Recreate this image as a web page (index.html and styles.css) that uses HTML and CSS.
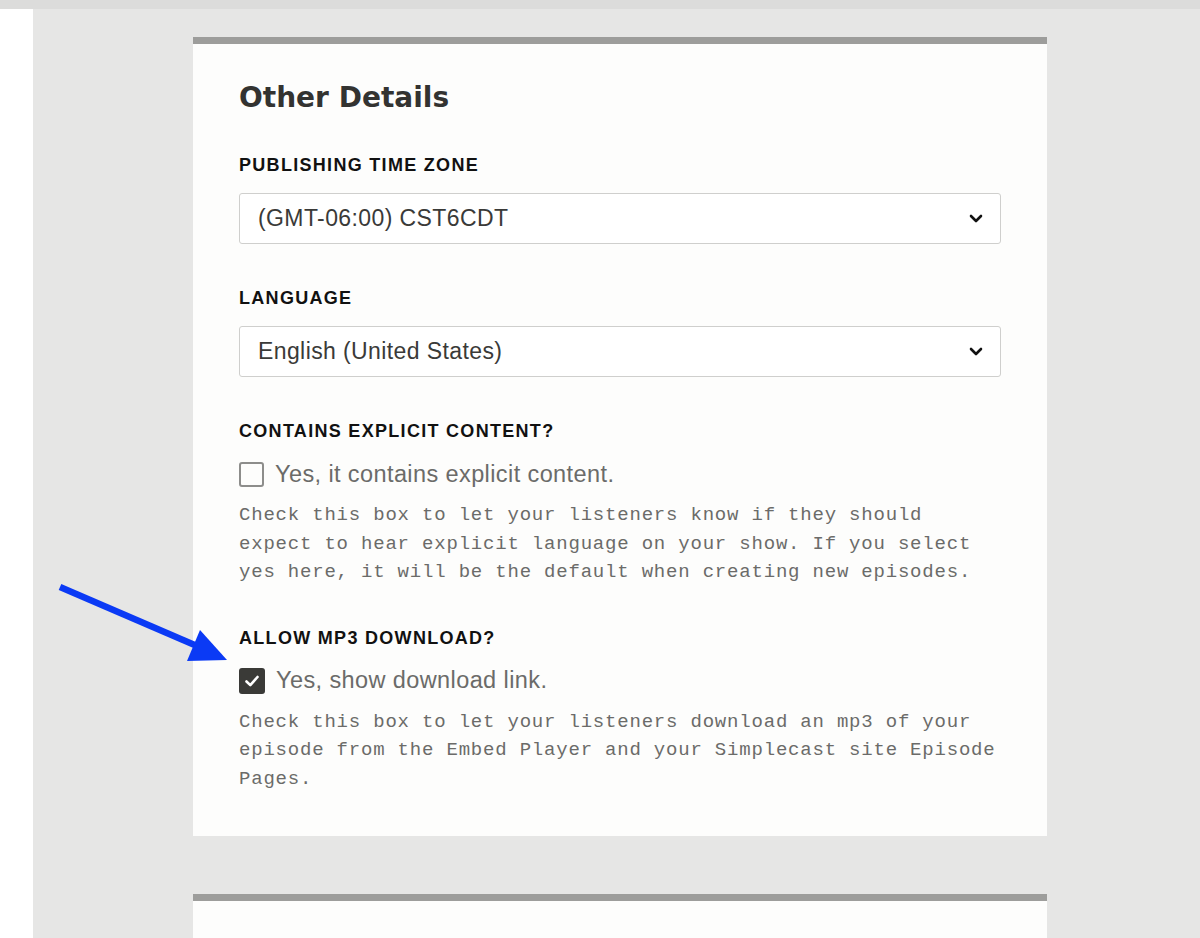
FILE: index.html
```html
<!DOCTYPE html>
<html lang="en">
  <head>
    <meta charset="UTF-8" />
    <title>Other Details</title>
    <link rel="stylesheet" href="styles.css">
  </head>
  <body>
    <div class="topbar"></div>
    <div class="page">
      <aside class="sidebar"></aside>

      <main class="main">
        <!--
          Other details card
        -->
        <section class="card">
          <h2 class="title">Other Details</h2>

          <label class="label">Publishing Time Zone</label>
          <div class="select">
            <span>(GMT-06:00) CST6CDT</span>
            <svg class="chevron" width="14" height="9" viewBox="0 0 14 9" aria-hidden="true">
              <path d="M2 2l5 5 5-5" fill="none" stroke="#111" stroke-width="2.6" stroke-linecap="round" stroke-linejoin="round" />
            </svg>
          </div>

          <label class="label">Language</label>
          <div class="select">
            <span>English (United States)</span>
            <svg class="chevron" width="14" height="9" viewBox="0 0 14 9" aria-hidden="true">
              <path d="M2 2l5 5 5-5" fill="none" stroke="#111" stroke-width="2.6" stroke-linecap="round" stroke-linejoin="round" />
            </svg>
          </div>

          <label class="label">Contains Explicit Content?</label>
          <div class="check">
            <span class="box"></span>
            <span>Yes, it contains explicit content.</span>
          </div>
          <p class="help">
            Check this box to let your listeners know if they should
            expect to hear explicit language on your show. If you select
            yes here, it will be the default when creating new episodes.
          </p>

          <label class="label">Allow MP3 Download?</label>
          <div class="check">
            <span class="box checked">
              <svg width="16" height="14" viewBox="0 0 16 14" aria-hidden="true">
                <path d="M2.5 7.5l3.8 3.6L13.5 3" fill="none" stroke="#fff" stroke-width="2.6" stroke-linecap="round" stroke-linejoin="round" />
              </svg>
            </span>
            <span>Yes, show download link.</span>
          </div>
          <p class="help">
            Check this box to let your listeners download an mp3 of your
            episode from the Embed Player and your Simplecast site Episode
            Pages.
          </p>
        </section>

        <section class="card next"></section>
      </main>
    </div>

    <!-- annotation arrow -->
    <svg class="arrow" width="240" height="680" viewBox="0 0 240 680" aria-hidden="true">
      <line x1="60" y1="587" x2="197" y2="646" stroke="#0b3af5" stroke-width="6.5" />
      <polygon points="200,630 187,661 227,660" fill="#0b3af5" />
    </svg>
  </body>
</html>
```

FILE: styles.css
```css
/*
  Global styles
*/

:root {
  --page-bg: #e6e6e5;
  --card-bg: #fdfdfc;
  --rule: #9d9d9b;
  --text: #333331;
  --muted: #6b6b69;
}
* {
  margin: 0;
  padding: 0;
  box-sizing: border-box;
}
body {
  height: 938px;
  background-color: #fff;
  font-family: "Liberation Sans", Arial, sans-serif;
  overflow: hidden;
}
.topbar {
  height: 9px;
  background-color: #dcdcdb;
}
.page {
  display: flex;
  height: 929px;
}
.sidebar {
  width: 33px;
  background-color: #fff;
}
.main {
  flex: 1;
  padding: 28px 0 0 160px;
  overflow: hidden;
  background-color: var(--page-bg);
}

/*
  Card
*/

.card {
  width: 854px;
  padding: 38px 46px 43px;
  border-top: 7px solid var(--rule);
  background-color: var(--card-bg);
}
.card.next {
  height: 80px;
  padding: 0;
  margin-top: 58px;
}
.card .title {
  font-family: "DejaVu Sans", sans-serif;
  font-size: 28px;
  font-weight: 700;
  line-height: 32px;
  color: var(--text);
}
.card .label {
  display: block;
  margin-top: 43px;
  font-size: 18px;
  font-weight: 700;
  line-height: 22px;
  letter-spacing: 1.3px;
  text-transform: uppercase;
  color: #111;
}
.card .title + .label {
  margin-top: 40px;
}
.card .help + .label {
  margin-top: 40px;
}

/*
  Select
*/

.select {
  display: flex;
  align-items: center;
  justify-content: space-between;
  height: 51px;
  margin-top: 17px;
  padding: 0 17px 0 18px;
  border: 1px solid #cfcfcd;
  border-radius: 3px;
  background-color: #fff;
  font-size: 23px;
  letter-spacing: 0.4px;
  color: #3a3a38;
}

/*
  Checkbox
*/

.check {
  display: flex;
  align-items: center;
  gap: 11px;
  height: 30px;
  margin-top: 17px;
  font-size: 23.5px;
  letter-spacing: 0.4px;
  color: var(--muted);
}
.check .box {
  display: flex;
  align-items: center;
  justify-content: center;
  width: 25px;
  height: 25px;
  border: 2px solid #8d8d8b;
  border-radius: 3px;
}
.check .box.checked {
  width: 26px;
  height: 26px;
  border: none;
  background-color: #3a3a37;
}
.help {
  margin-top: 12px;
  font-family: "Liberation Mono", monospace;
  font-size: 19px;
  line-height: 28.5px;
  letter-spacing: 0.8px;
  color: var(--muted);
}

/*
  Annotation
*/

.arrow {
  position: absolute;
  top: 0;
  left: 0;
}
```
